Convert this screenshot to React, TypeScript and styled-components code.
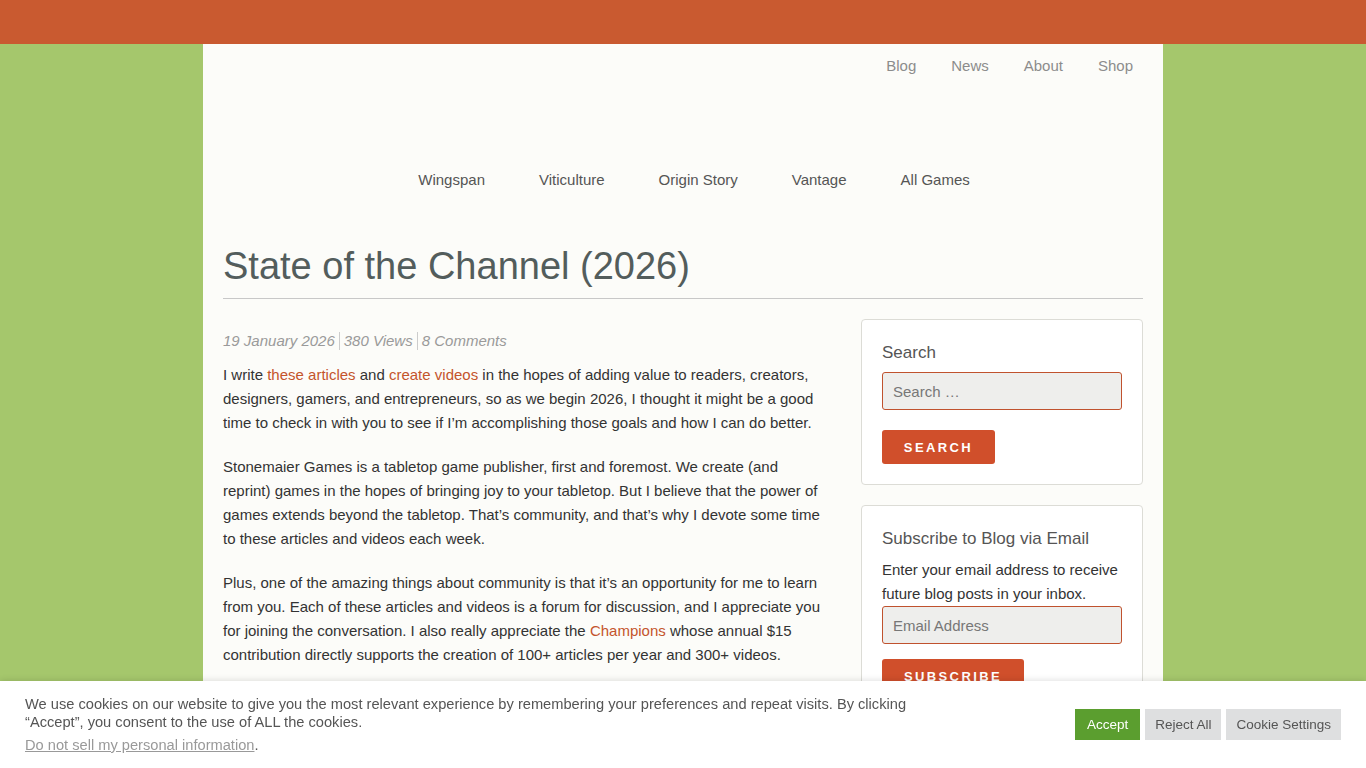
import React from 'react';
import styled, { createGlobalStyle } from 'styled-components';

const GlobalStyle = createGlobalStyle`
html, body {
    margin: 0;
    padding: 0;
    background: #a5c76c;
    font-family: "Liberation Sans", Arial, sans-serif;
    height: 768px;
    overflow: hidden;
}
* { box-sizing: border-box; }
`;

const TopBar = styled.div`
height: 44px;
background-color: #c95a30;
`;

const Page = styled.div`
width: 960px;
margin: 0 auto;
background-color: #fcfcf9;
min-height: 724px;
padding: 0 20px;
`;

const UtilityNav = styled.nav`
display: flex;
justify-content: flex-end;
gap: 35px;
padding: 13px 10px 0 0;
height: 100px;
`;

const UtilityLink = styled.a`
font-size: 15px;
line-height: 18px;
color: #8c8c8c;
text-decoration: none;
`;

const GameNav = styled.nav`
display: flex;
justify-content: center;
gap: 54px;
padding: 27px 0 0 22px;
height: 98px;
`;

const GameLink = styled.a`
font-size: 15px;
line-height: 18px;
color: #555;
text-decoration: none;
`;

const Title = styled.h1`
margin: 0;
font-size: 38px;
line-height: 48px;
font-weight: normal;
color: #535d5c;
padding-bottom: 8px;
border-bottom: 1px solid #c8c8c8;
`;

const Columns = styled.div`
display: flex;
gap: 38px;
padding-top: 20px;
`;

const Main = styled.main`
width: 600px;
padding-top: 13px;
`;

const Meta = styled.div`
display: flex;
align-items: center;
font-size: 15px;
line-height: 18px;
font-style: italic;
color: #9a9a9a;
margin-bottom: 13px;
`;

const MetaItem = styled.span<{ divided?: boolean }>`
padding: 0 4px;
border-left: ${({ divided }) => divided ? "1px solid #ccc" : "none"};
&:first-child { padding-left: 0; }
`;

const Para = styled.p`
margin: 0 0 20px;
font-size: 15px;
line-height: 24px;
color: #333;
`;

const Link = styled.a`
color: #c4542c;
text-decoration: none;
`;

const Sidebar = styled.aside`
width: 282px;
display: flex;
flex-direction: column;
gap: 20px;
`;

const Widget = styled.section`
border: 1px solid #dcdcd6;
border-radius: 4px;
background: #fff;
padding: 22px 20px 20px;
`;

const WidgetTitle = styled.h3`
margin: 0 0 8px;
font-size: 17px;
line-height: 22px;
font-weight: normal;
color: #555;
`;

const WidgetText = styled.p`
margin: 0 0 0;
font-size: 15px;
line-height: 24px;
color: #333;
`;

const Input = styled.input`
display: block;
width: 240px;
height: 38px;
border: 1px solid #c0522e;
border-radius: 3px;
background: #eeeeec;
padding: 0 10px;
font-family: inherit;
font-size: 15px;
color: #333;
&::placeholder { color: #777; }
`;

const Button = styled.button<{ w: number, top: number }>`
display: block;
margin-top: ${({ top }) => top}px;
width: ${({ w }) => w}px;
height: 34px;
border: none;
border-radius: 3px;
background: #d04f2b;
color: #fff;
font-family: inherit;
font-size: 13px;
font-weight: bold;
letter-spacing: 2.4px;
`;

const CookieBar = styled.div`
position: fixed;
left: 0;
right: 0;
bottom: 0;
height: 87px;
background: #fff;
box-shadow: 0 -1px 6px rgba(0, 0, 0, 0.12);
display: flex;
justify-content: space-between;
padding: 14px 25px 0;
`;

const CookieText = styled.div`
width: 940px;
flex-shrink: 0;
font-size: 14.65px;
line-height: 18px;
color: #555;
`;

const CookieLink = styled.a`
display: inline-block;
margin-top: 5px;
color: #999;
text-decoration: underline;
`;

const CookieButtons = styled.div`
display: flex;
gap: 5px;
padding-top: 14px;
`;

const CookieButton = styled.button<{ primary?: boolean }>`
height: 31px;
padding: 0 ${({ primary }) => primary ? 12 : 10}px;
border: none;
background: ${({ primary }) => primary ? "#5b9e2f" : "#dedfe0"};
color: ${({ primary }) => primary ? "#fff" : "#555"};
font-family: inherit;
font-size: 13.5px;
`;

const App: React.FC = () => {
    return <>
        <GlobalStyle />
        <TopBar />
        <Page>
            <UtilityNav>
                {["Blog", "News", "About", "Shop"].map(item => <UtilityLink key={item}>{item}</UtilityLink>)}
            </UtilityNav>
            <GameNav>
                {["Wingspan", "Viticulture", "Origin Story", "Vantage", "All Games"].map(item => <GameLink key={item}>{item}</GameLink>)}
            </GameNav>
            <Title>State of the Channel (2026)</Title>
            <Columns>
                <Main>
                    <Meta>
                        <MetaItem>19 January 2026</MetaItem>
                        <MetaItem divided>380 Views</MetaItem>
                        <MetaItem divided>8 Comments</MetaItem>
                    </Meta>
                    <Para>
                        I write <Link>these articles</Link> and <Link>create videos</Link> in the hopes of adding value to readers, creators, designers, gamers, and entrepreneurs, so as we begin 2026, I thought it might be a good time to check in with you to see if I’m accomplishing those goals and how I can do better.
                    </Para>
                    <Para>
                        Stonemaier Games is a tabletop game publisher, first and foremost. We create (and reprint) games in the hopes of bringing joy to your tabletop. But I believe that the power of games extends beyond the tabletop. That’s community, and that’s why I devote some time to these articles and videos each week.
                    </Para>
                    <Para>
                        Plus, one of the amazing things about community is that it’s an opportunity for me to learn from you. Each of these articles and videos is a forum for discussion, and I appreciate you for joining the conversation. I also really appreciate the <Link>Champions</Link> whose annual $15 contribution directly supports the creation of 100+ articles per year and 300+ videos.
                    </Para>
                </Main>
                <Sidebar>
                    <Widget>
                        <WidgetTitle>Search</WidgetTitle>
                        <Input placeholder="Search …" />
                        <Button w={113} top={20}>SEARCH</Button>
                    </Widget>
                    <Widget>
                        <WidgetTitle>Subscribe to Blog via Email</WidgetTitle>
                        <WidgetText>Enter your email address to receive future blog posts in your inbox.</WidgetText>
                        <Input placeholder="Email Address" />
                        <Button w={142} top={15}>SUBSCRIBE</Button>
                    </Widget>
                </Sidebar>
            </Columns>
        </Page>
        <CookieBar>
            <CookieText>
                We use cookies on our website to give you the most relevant experience by remembering your preferences and repeat visits. By clicking
                <br />
                “Accept”, you consent to the use of ALL the cookies.
                <br />
                <CookieLink>Do not sell my personal information</CookieLink>.
            </CookieText>
            <CookieButtons>
                <CookieButton primary>Accept</CookieButton>
                <CookieButton>Reject All</CookieButton>
                <CookieButton>Cookie Settings</CookieButton>
            </CookieButtons>
        </CookieBar>
    </>
}

export default App;
